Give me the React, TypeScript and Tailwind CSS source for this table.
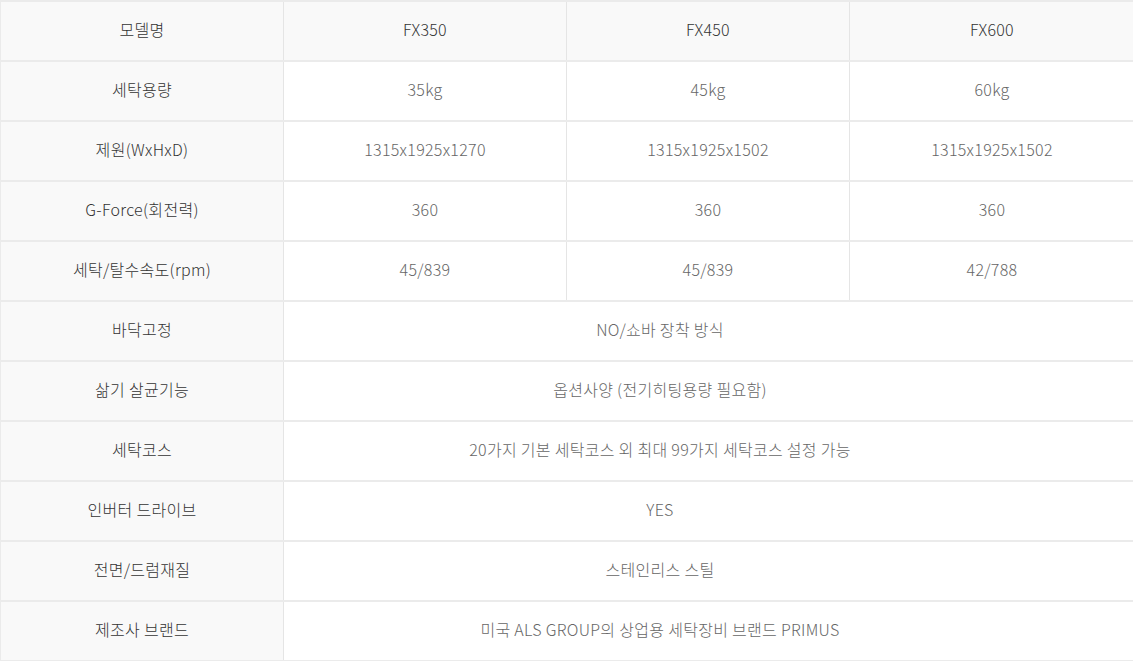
import React from 'react'

type Row = { label: string; values: string[] }

const rows: Row[] = [
  { label: '세탁용량', values: ['35kg', '45kg', '60kg'] },
  { label: '제원(WxHxD)', values: ['1315x1925x1270', '1315x1925x1502', '1315x1925x1502'] },
  { label: 'G-Force(회전력)', values: ['360', '360', '360'] },
  { label: '세탁/탈수속도(rpm)', values: ['45/839', '45/839', '42/788'] },
  { label: '바닥고정', values: ['NO/쇼바 장착 방식'] },
  { label: '삶기 살균기능', values: ['옵션사양 (전기히팅용량 필요함)'] },
  { label: '세탁코스', values: ['20가지 기본 세탁코스 외 최대 99가지 세탁코스 설정 가능'] },
  { label: '인버터 드라이브', values: ['YES'] },
  { label: '전면/드럼재질', values: ['스테인리스 스틸'] },
  { label: '제조사 브랜드', values: ['미국 ALS GROUP의 상업용 세탁장비 브랜드 PRIMUS'] },
]

const font = { fontFamily: '"Noto Sans CJK KR", "Noto Sans", sans-serif' }

export default function App() {
  return (
    <div className="w-[1133px] bg-white" style={font}>
      <div className="border-t-2 border-l border-[#ebebeb] text-[16px] font-light tracking-[0.3px]">
        {/* --- 헤더 --- */}
        <div className="grid grid-cols-[283px_283px_283px_284px] h-[60px] border-b-2 border-[#ebebeb] bg-[#f9f9f9] text-[#333]">
          {['모델명', 'FX350', 'FX450', 'FX600'].map((h, i) => (
            <div
              key={h}
              className={
                'flex items-center justify-center pb-1 ' +
                (i < 3 ? 'border-r border-[#e5e5e5]' : '')
              }
            >
              {h}
            </div>
          ))}
        </div>

        {rows.map((row) => (
          <div
            key={row.label}
            className="grid grid-cols-[283px_283px_283px_284px] h-[60px] border-b-2 border-[#ebebeb]"
          >
            <div className="flex items-center justify-center pb-1 bg-[#f9f9f9] text-[#333] border-r border-[#e5e5e5]">
              {row.label}
            </div>
            {row.values.length === 1 ? (
              <div className="col-span-3 flex items-center justify-center pb-1 pr-[98px] text-[#666]">
                {row.values[0]}
              </div>
            ) : (
              row.values.map((v, i) => (
                <div
                  key={i}
                  className={
                    'flex items-center justify-center pb-1 text-[#666] ' +
                    (i < 2 ? 'border-r border-[#e5e5e5]' : '')
                  }
                >
                  {v}
                </div>
              ))
            )}
          </div>
        ))}
      </div>
    </div>
  )
}
